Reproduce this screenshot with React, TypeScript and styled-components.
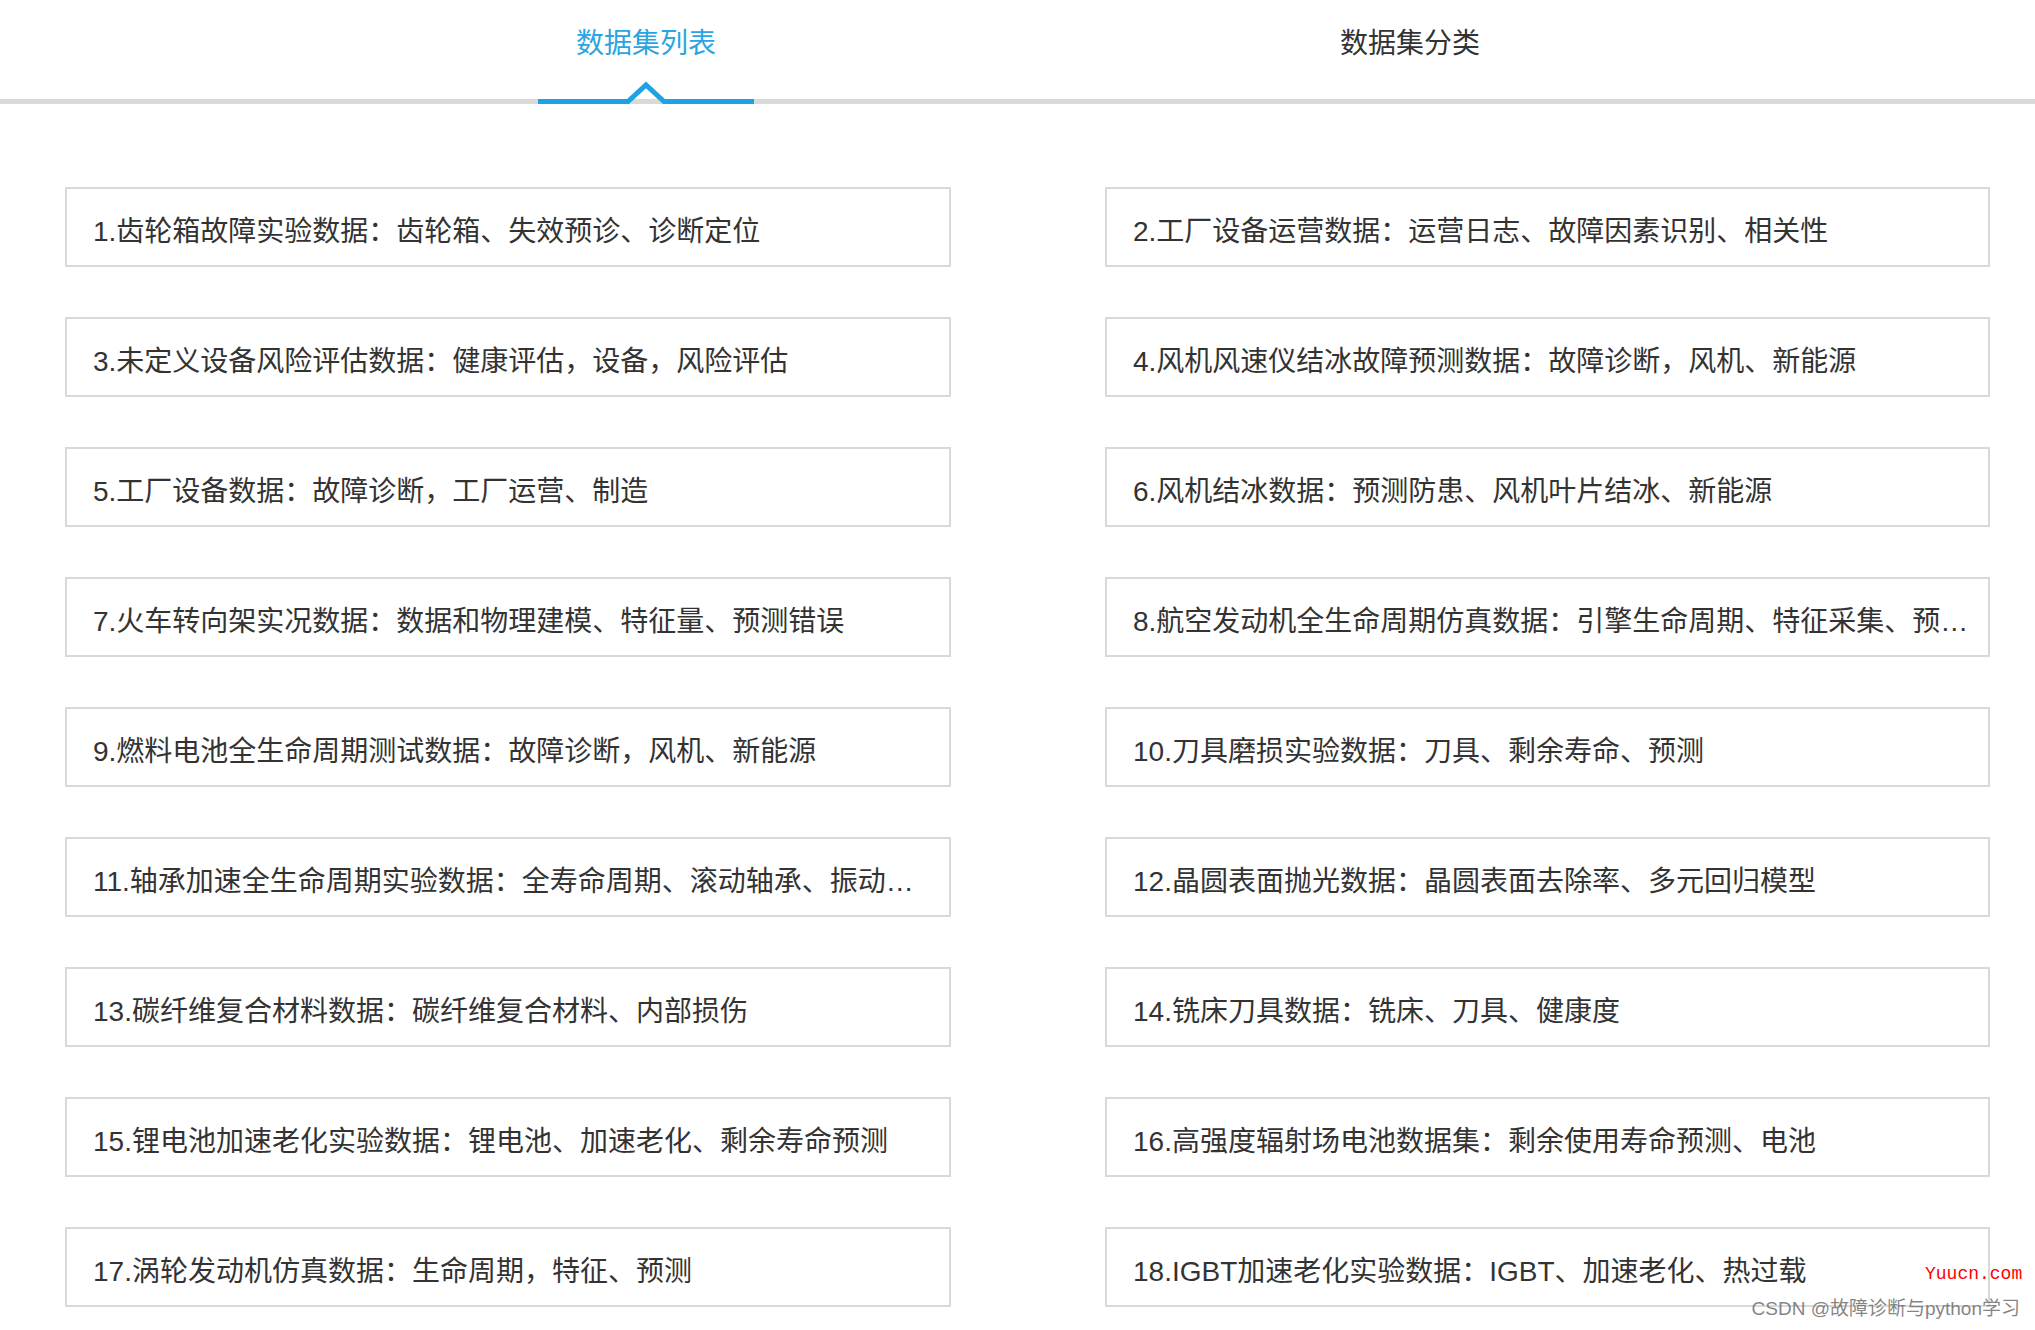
import React, { useState } from "react";
import styled, { createGlobalStyle } from "styled-components";

const GlobalStyle = createGlobalStyle`
  html, body {
    margin: 0;
    padding: 0;
    background: #fff;
  }
  body {
    font-family: "Liberation Sans", "Noto Sans CJK SC", sans-serif;
    color: #333;
  }
`;

const datasets = [
  "1.齿轮箱故障实验数据：齿轮箱、失效预诊、诊断定位",
  "2.工厂设备运营数据：运营日志、故障因素识别、相关性",
  "3.未定义设备风险评估数据：健康评估，设备，风险评估",
  "4.风机风速仪结冰故障预测数据：故障诊断，风机、新能源",
  "5.工厂设备数据：故障诊断，工厂运营、制造",
  "6.风机结冰数据：预测防患、风机叶片结冰、新能源",
  "7.火车转向架实况数据：数据和物理建模、特征量、预测错误",
  "8.航空发动机全生命周期仿真数据：引擎生命周期、特征采集、预测性维护",
  "9.燃料电池全生命周期测试数据：故障诊断，风机、新能源",
  "10.刀具磨损实验数据：刀具、剩余寿命、预测",
  "11.轴承加速全生命周期实验数据：全寿命周期、滚动轴承、振动信号",
  "12.晶圆表面抛光数据：晶圆表面去除率、多元回归模型",
  "13.碳纤维复合材料数据：碳纤维复合材料、内部损伤",
  "14.铣床刀具数据：铣床、刀具、健康度",
  "15.锂电池加速老化实验数据：锂电池、加速老化、剩余寿命预测",
  "16.高强度辐射场电池数据集：剩余使用寿命预测、电池",
  "17.涡轮发动机仿真数据：生命周期，特征、预测",
  "18.IGBT加速老化实验数据：IGBT、加速老化、热过载",
];

const tabs = ["数据集列表", "数据集分类"];

function App() {
  const [active, setActive] = useState(0);

  return (
    <Page>
      <GlobalStyle />
      <TabBar>
        {tabs.map((t, i) => (
          <Tab key={t} onClick={() => setActive(i)}>
            <TabLabel $active={active === i}>
              {t}
              {active === i && (
                <Caret viewBox="0 0 56 24" width="56" height="24">
                  <rect x="0" y="19" width="56" height="5" fill="#d9d9d9" />
                  <polyline
                    points="-2,21.5 10,21.5 28,5 46,21.5 58,21.5"
                    fill="none"
                    stroke="#1ba3e4"
                    strokeWidth="5"
                  />
                </Caret>
              )}
            </TabLabel>
          </Tab>
        ))}
      </TabBar>

      <CardGrid>
        {datasets.map((d) => (
          <Card key={d} title={d}>
            <CardText>{d}</CardText>
          </Card>
        ))}
      </CardGrid>

      <SiteMark>Yuucn.com</SiteMark>
      <AuthorMark>CSDN @故障诊断与python学习</AuthorMark>
    </Page>
  );
}

export default App;

const Page = styled.div`
  position: relative;
  width: 2035px;
  min-height: 1330px;
  overflow: hidden;
`;

const TabBar = styled.div`
  display: flex;
  height: 99px;
  padding-left: 264px;
  border-bottom: 5px solid #d9d9d9;
`;

const Tab = styled.div`
  width: 764px;
  display: flex;
  justify-content: center;
  cursor: pointer;
`;

const TabLabel = styled.div<{ $active: boolean }>`
  position: relative;
  width: 216px;
  padding-top: 21px;
  text-align: center;
  font-family: "Noto Sans CJK SC", sans-serif;
  font-size: 28px;
  line-height: 40px;
  color: ${(p) => (p.$active ? "#2aa4e2" : "#333")};

  &::after {
    content: "";
    display: ${(p) => (p.$active ? "block" : "none")};
    position: absolute;
    left: 0;
    right: 0;
    bottom: -104px;
    height: 5px;
    background: #1ba3e4;
    transform: translateY(-99px);
  }
`;

const Caret = styled.svg`
  position: absolute;
  left: 80px;
  top: 80px;
  z-index: 1;
  overflow: visible;
`;

const CardGrid = styled.div`
  display: grid;
  grid-template-columns: 886px 885px;
  grid-auto-rows: 80px;
  column-gap: 154px;
  row-gap: 50px;
  padding: 83px 45px 0 65px;
`;

const Card = styled.div`
  box-sizing: border-box;
  display: flex;
  align-items: center;
  min-width: 0;
  border: 2px solid #d9d9d9;
  padding: 0 18px 0 26px;
`;

const CardText = styled.div`
  font-size: 28px;
  line-height: 40px;
  color: #333;
  white-space: nowrap;
  overflow: hidden;
  text-overflow: ellipsis;
  margin-top: 9px;
`;

const SiteMark = styled.div`
  position: absolute;
  left: 1925px;
  top: 1263px;
  font-family: "Liberation Mono", monospace;
  font-size: 18px;
  line-height: 22px;
  color: #ff0000;
`;

const AuthorMark = styled.div`
  position: absolute;
  right: 15px;
  top: 1297px;
  font-family: "Liberation Sans", "Noto Sans CJK SC", sans-serif;
  font-size: 19px;
  line-height: 24px;
  color: rgba(110, 110, 110, 0.85);
  white-space: nowrap;
`;
